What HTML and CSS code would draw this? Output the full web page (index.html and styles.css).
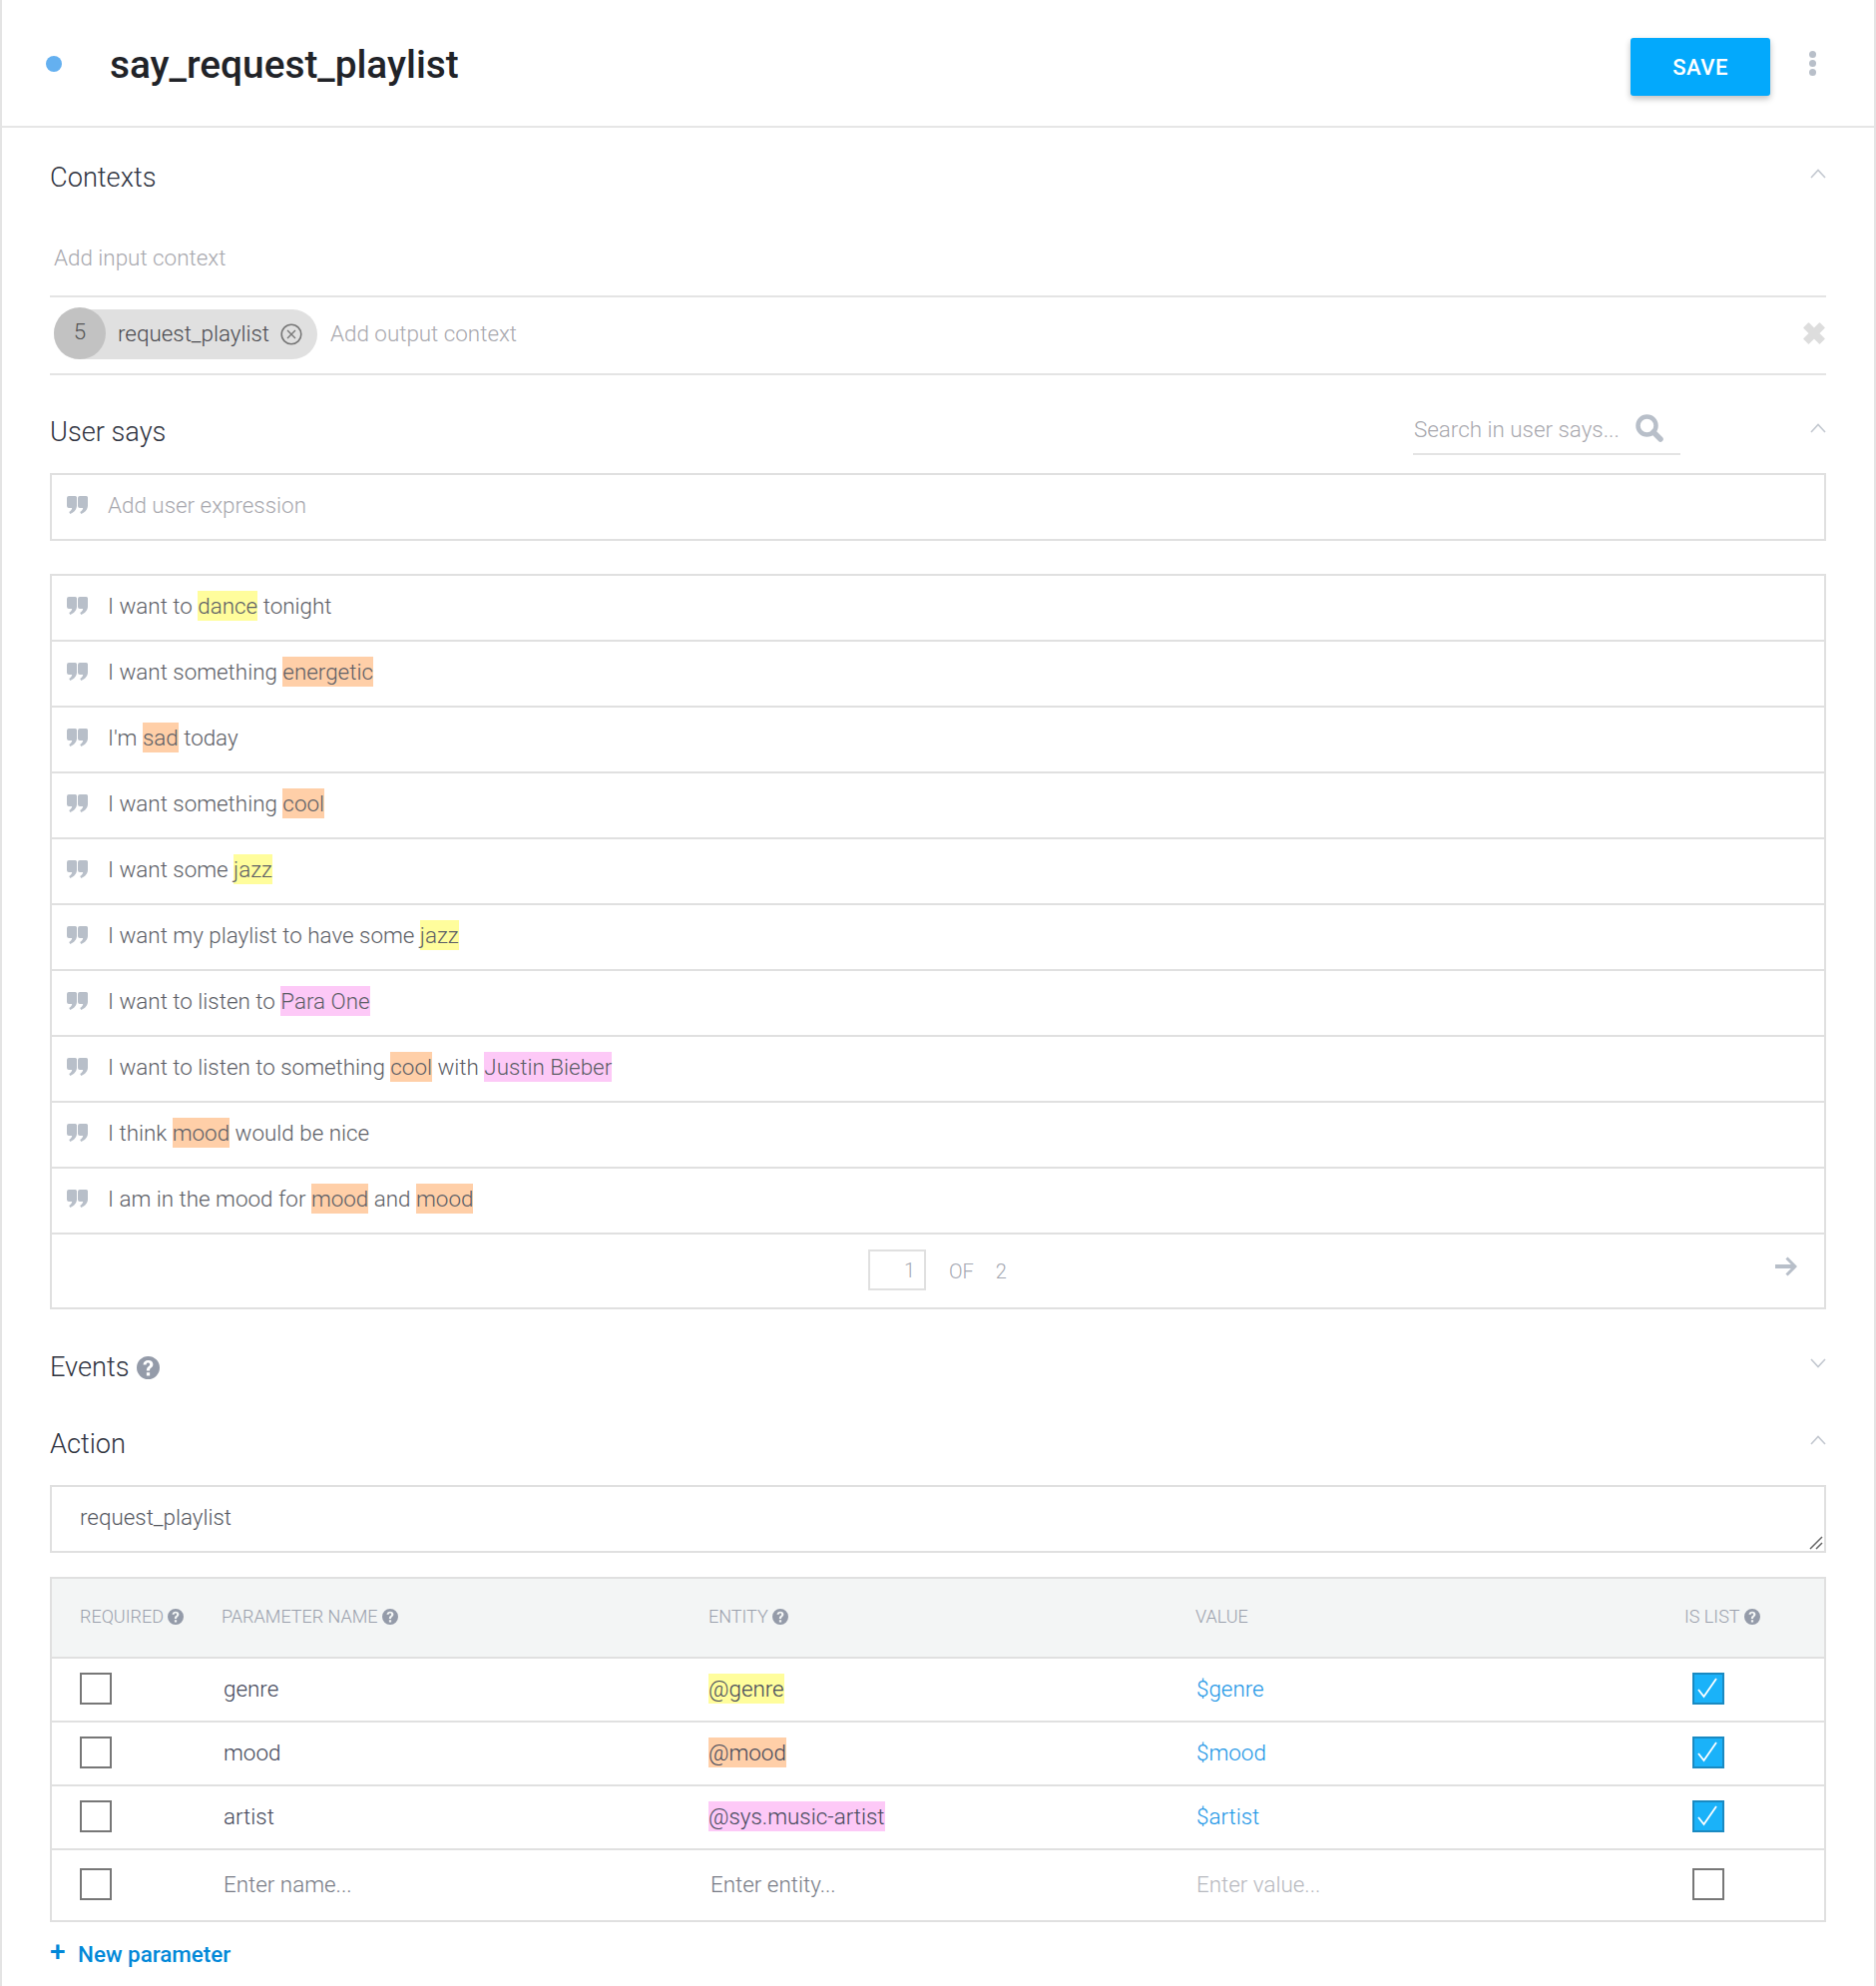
FILE: index.html
```html
<!DOCTYPE html>
<html lang="en">
<head>
<meta charset="utf-8">
<title>say_request_playlist</title>
<link rel="stylesheet" href="styles.css">
</head>
<body>
<svg class="defs" width="0" height="0" aria-hidden="true">
  <defs>
    <symbol id="quote" viewBox="0 0 21 18"><path d="M2 0h6.500Q10 0 10 1.500v8c0 3.800-2.700 7-6.700 8.500l-1.100-1.900c1.700-1 2.700-2.300 3-4.100H2q-2 0-2-2V2q0-2 2-2zM13 0h6.500Q21 0 21 1.500v8c0 3.800-2.700 7-6.700 8.500l-1.100-1.900c1.700-1 2.700-2.300 3-4.100H13q-2 0-2-2V2q0-2 2-2z"/></symbol>
    <symbol id="help" viewBox="0 0 24 24"><path fill-rule="evenodd" d="M12 0a12 12 0 1 1 0 24a12 12 0 0 1 0-24zM10.300 17v3.300h3.400V17zM12 4.200c-3 0-5 1.700-5.200 4.600h3.200c.1-1.200.8-1.900 1.900-1.900 1.100 0 1.800.7 1.800 1.600 0 .9-.5 1.400-1.400 2.100-1.500 1.100-2 2.100-2 4.400h3.300c0-1.400.3-2 1.300-2.700 1.400-1 2.200-2.100 2.200-3.900 0-2.500-2-4.200-5.100-4.200z"/></symbol>
    <symbol id="check" viewBox="0 0 28 28"><path d="M4 15l5.500 7L22 4" fill="none" stroke="#fff" stroke-width="1.800"/></symbol>
    <symbol id="up" viewBox="0 0 16 10"><path d="M1 9l7-7.500L15 9" fill="none" stroke="currentColor" stroke-width="1.600"/></symbol>
  </defs>
</svg>
<main class="page">
  <header class="top">
    <span class="dot"></span>
    <h1 class="title">say_request_playlist</h1>
    <button class="save" type="button">SAVE</button>
    <span class="more"><i></i><i></i><i></i></span>
  </header>

  <section class="contexts">
    <div class="sec-head ctx-head"><h2>Contexts</h2><svg class="chev"><use href="#up"/></svg></div>
    <div class="ctx-input">Add input context</div>
    <div class="ctx-output">
      <span class="chip">
        <span class="chip-n">5</span>
        <span class="chip-t">request_playlist</span>
        <svg class="chip-x" viewBox="0 0 22 22"><circle cx="11" cy="11" r="9.800" fill="none" stroke="#777" stroke-width="1.600"/><path d="M7 7l8 8M15 7l-8 8" stroke="#777" stroke-width="1.400"/></svg>
      </span>
      <span class="ph out-ph">Add output context</span>
      <svg class="clear" viewBox="0 0 22 22"><path d="M5.500 1L11 6.500 16.500 1 21 5.500 15.500 11 21 16.500 16.500 21 11 15.500 5.500 21 1 16.500 6.500 11 1 5.500z" stroke="#ddd" stroke-width="1.500" stroke-linejoin="round" fill="#ddd"/></svg>
    </div>
  </section>

  <section class="says">
    <div class="sec-head says-head">
      <h2>User says</h2>
      <div class="search"><span>Search in user says...</span>
        <svg class="search-i" viewBox="0 0 28 28"><circle cx="11.500" cy="11.500" r="9" fill="none" stroke="#b8bfc9" stroke-width="4.500"/><path d="M18 18L25 25" stroke="#b8bfc9" stroke-width="5.500" stroke-linecap="round"/></svg>
      </div>
      <svg class="chev"><use href="#up"/></svg>
    </div>
    <div class="add-expr"><svg class="q"><use href="#quote"/></svg><span class="ph">Add user expression</span></div>
    <div class="list">
      <div class="row"><svg class="q"><use href="#quote"/></svg><span>I want to <mark class="y">dance</mark> tonight</span></div>
      <div class="row"><svg class="q"><use href="#quote"/></svg><span>I want something <mark class="o">energetic</mark></span></div>
      <div class="row"><svg class="q"><use href="#quote"/></svg><span>I'm <mark class="o">sad</mark> today</span></div>
      <div class="row"><svg class="q"><use href="#quote"/></svg><span>I want something <mark class="o">cool</mark></span></div>
      <div class="row"><svg class="q"><use href="#quote"/></svg><span>I want some <mark class="y">jazz</mark></span></div>
      <div class="row"><svg class="q"><use href="#quote"/></svg><span>I want my playlist to have some <mark class="y">jazz</mark></span></div>
      <div class="row"><svg class="q"><use href="#quote"/></svg><span>I want to listen to <mark class="p">Para One</mark></span></div>
      <div class="row"><svg class="q"><use href="#quote"/></svg><span>I want to listen to something <mark class="o">cool</mark> with <mark class="p">Justin Bieber</mark></span></div>
      <div class="row"><svg class="q"><use href="#quote"/></svg><span>I think <mark class="o">mood</mark> would be nice</span></div>
      <div class="row"><svg class="q"><use href="#quote"/></svg><span>I am in the mood for <mark class="o">mood</mark> and <mark class="o">mood</mark></span></div>
      <div class="pager">
        <span class="page-box">1</span><span class="of">OF</span><span class="total">2</span>
        <svg class="arrow" viewBox="0 0 23 20"><path d="M1 10h18" stroke="#b8bfc9" stroke-width="4"/><path d="M12.500 1.500l8.500 8.500-8.500 8.500" fill="none" stroke="#b8bfc9" stroke-width="3"/></svg>
      </div>
    </div>
  </section>

  <div class="sec-head events-head"><h2>Events</h2><svg class="help-l"><use href="#help"/></svg><svg class="chev down"><use href="#up"/></svg></div>

  <section class="action">
    <div class="sec-head action-head"><h2>Action</h2><svg class="chev"><use href="#up"/></svg></div>
    <div class="action-box">request_playlist
      <svg class="grip" viewBox="0 0 14 14"><path d="M1 13L13 1M7 13l6-6" stroke="#666" stroke-width="1.500"/></svg>
    </div>
    <div class="table">
      <div class="tr th">
        <span class="c-req">REQUIRED<svg class="help-s"><use href="#help"/></svg></span>
        <span class="c-name">PARAMETER NAME<svg class="help-s"><use href="#help"/></svg></span>
        <span class="c-ent">ENTITY<svg class="help-s"><use href="#help"/></svg></span>
        <span class="c-val">VALUE</span>
        <span class="c-list">IS LIST<svg class="help-s"><use href="#help"/></svg></span>
      </div>
      <div class="tr">
        <span class="c-req"><span class="box"></span></span>
        <span class="c-name in">genre</span>
        <span class="c-ent"><mark class="y">@genre</mark></span>
        <span class="c-val link">$genre</span>
        <span class="c-list"><span class="box on"><svg><use href="#check"/></svg></span></span>
      </div>
      <div class="tr">
        <span class="c-req"><span class="box"></span></span>
        <span class="c-name in">mood</span>
        <span class="c-ent"><mark class="o">@mood</mark></span>
        <span class="c-val link">$mood</span>
        <span class="c-list"><span class="box on"><svg><use href="#check"/></svg></span></span>
      </div>
      <div class="tr">
        <span class="c-req"><span class="box"></span></span>
        <span class="c-name in">artist</span>
        <span class="c-ent"><mark class="p">@sys.music-artist</mark></span>
        <span class="c-val link">$artist</span>
        <span class="c-list"><span class="box on"><svg><use href="#check"/></svg></span></span>
      </div>
      <div class="tr last">
        <span class="c-req"><span class="box"></span></span>
        <span class="c-name in mid">Enter name...</span>
        <span class="c-ent in mid">Enter entity...</span>
        <span class="c-val faint">Enter value...</span>
        <span class="c-list"><span class="box"></span></span>
      </div>
    </div>
    <div class="new-param"><span class="plus">+</span>New parameter</div>
  </section>
</main>
</body>
</html>
```
FILE: styles.css
```css
* { box-sizing: border-box; }
html, body { margin: 0; padding: 0; background: #fff; }
body { font-family: Roboto, "Liberation Sans", sans-serif; font-weight: 300; color: #44485a; }
.defs { position: absolute; }
.page { width: 1880px; height: 1990px; overflow: hidden; border-left: 2px solid #e4e4e4; border-right: 2px solid #e4e4e4; }
h1, h2 { margin: 0; }

.top { height: 128px; border-bottom: 2px solid #e6e6e6; display: flex; align-items: flex-start; padding-left: 44px; }
.dot { width: 16px; height: 16px; border-radius: 50%; background: #64b0f0; margin-top: 56px; }
.title { font-size: 38.8px; font-weight: 500; color: #212328; line-height: 44px; margin: 43px 0 0 48px; flex: 1; }
.save { width: 140px; height: 58px; margin-top: 38px; background: #03a9fc; color: #fff; border: 0; border-radius: 3px; font: 500 22px Roboto, sans-serif; letter-spacing: .5px; box-shadow: 0 3px 6px rgba(0,0,0,.25); }
.more { display: flex; flex-direction: column; gap: 2px; margin: 51px 58px 0 39px; }
.more i { width: 7px; height: 7px; border-radius: 50%; background: #b8bfc9; }

.sec-head { display: flex; align-items: center; margin-left: 48px; margin-right: 48px; }
.sec-head h2 { font-size: 27.2px; font-weight: 300; color: #2f3340; line-height: 34px; }
.chev { width: 16px; height: 10px; color: #c3c8d0; margin-left: auto; margin-top: -8px; }
.down { transform: scaleY(-1); }

.ctx-head { height: 34px; margin-top: 33px; }
.ctx-input { margin: 19px 48px 0; height: 84px; padding: 27px 4px 0; border-bottom: 2px solid #e4e4e4; font-size: 22.4px; line-height: 34px; color: #a8a8ae; }
.ctx-output { margin: 0 48px; height: 78px; border-bottom: 2px solid #e4e4e4; display: flex; align-items: center; padding-left: 4px; }
.chip { display: flex; align-items: center; width: 264px; height: 50px; border-radius: 25px; background: #e0e0e0; margin-top: -2px; }
.chip-n { width: 52px; height: 52px; flex: none; border-radius: 50%; background: #c2c2c2; text-align: center; font-size: 22.4px; line-height: 48px; color: #555; margin-top: -2px; }
.chip-t { font-size: 22.4px; margin-left: 12px; margin-top: -2px; color: #4a4a4f; }
.chip-x { width: 22px; height: 22px; margin-left: 11px; }
.ph { color: #a8a8ae; font-size: 22.4px; }
.out-ph { margin-left: 13px; margin-top: -4px; }
.clear { width: 22px; height: 22px; margin-left: auto; margin-right: 1px; margin-top: -4px; }

.says-head { height: 54px; margin-top: 30px; }
.search { display: flex; align-items: flex-start; width: 268px; height: 52px; margin-left: auto; border-bottom: 2px solid #e4e4e4; margin-top: -6px; font-size: 22.4px; color: #a8a8ae; padding-left: 1px; }
.search span { line-height: 34px; margin-top: 9px; }
.search-i { width: 28px; height: 28px; margin-left: auto; margin-right: 17px; margin-top: 11px; }
.says-head .chev { margin-left: 130px; }

.add-expr, .row { display: flex; align-items: center; padding-left: 15px; padding-bottom: 5px; font-size: 22.4px; }
.add-expr { margin: 14px 48px 0; height: 68px; border: 2px solid #e0e0e0; }
.q { width: 21px; height: 18px; fill: #b8bfc9; flex: none; margin-right: 20px; }
.list { margin: 33px 48px 0; border: solid #e0e0e0; border-width: 0 2px 2px; }
.row { height: 66px; border-top: 2px solid #e0e0e0; color: #5c5e66; }
mark { background: none; color: inherit; padding: 2px 0; }
mark.y { background: #fffd9c; }
mark.o { background: #ffcfa8; }
mark.p { background: #fdc9f7; }
.pager { height: 75px; border-top: 2px solid #e0e0e0; display: flex; align-items: center; padding-left: 818px; font-size: 20px; color: #a4a8b2; }
.page-box { width: 58px; height: 41px; border: 2px solid #e0e0e0; text-align: right; padding-right: 9px; line-height: 39px; margin-top: -3px; }
.of { margin-left: 23px; }
.total { margin-left: 22px; }
.arrow { width: 23px; height: 20px; margin-left: auto; margin-right: 27px; margin-top: -10px; }

.events-head { height: 34px; margin-top: 41px; }
.help-l { width: 23px; height: 23px; fill: #949ba9; margin-left: 7px; }
.action-head { height: 34px; margin-top: 43px; }
.action-box { margin: 24px 48px 0; height: 68px; border: 2px solid #e0e0e0; font-size: 22.4px; padding: 13px 28px; line-height: 34px; color: #55585f; position: relative; }
.grip { position: absolute; right: 1px; bottom: 1px; width: 14px; height: 14px; }
.table { margin: 24px 48px 0; border: 2px solid #e0e0e0; }
.tr { display: grid; grid-template-columns: 142px 488px 488px 490px 1fr; align-items: center; height: 64px; border-bottom: 2px solid #e0e0e0; padding-bottom: 2px; font-size: 22.4px; padding-left: 28px; }
.tr.th { height: 80px; background: #f3f5f5; font-size: 18px; color: #9aa0ac; padding-bottom: 4px; }
.tr.last { height: 70px; border-bottom: 0; }
.c-name.in { padding-left: 2px; }
.c-ent.in { padding-left: 2px; }
.mid { color: #777b85; }
.faint { color: #b6b8be; }
.link { color: #1b96e6; }
.c-val { padding-left: 1px; }
.th .c-val { padding-left: 0; }
.c-list { padding-left: 8px; }
.th .c-list { padding-left: 0; }
.help-s { width: 16px; height: 16px; fill: #949ba9; margin-left: 4px; vertical-align: -2px; }
.box { display: block; width: 32px; height: 32px; border: 2px solid #777; }
.box.on { background: #1ab2f9; border-color: #1a8ac2; }
.box svg { display: block; width: 28px; height: 28px; }
.new-param { margin: 17px 0 0 48px; font-size: 22.4px; font-weight: 500; color: #0288d8; line-height: 30px; display: flex; align-items: center; }
.plus { font-size: 28px; width: 28px; line-height: 24px; margin-top: -4px; }
```
